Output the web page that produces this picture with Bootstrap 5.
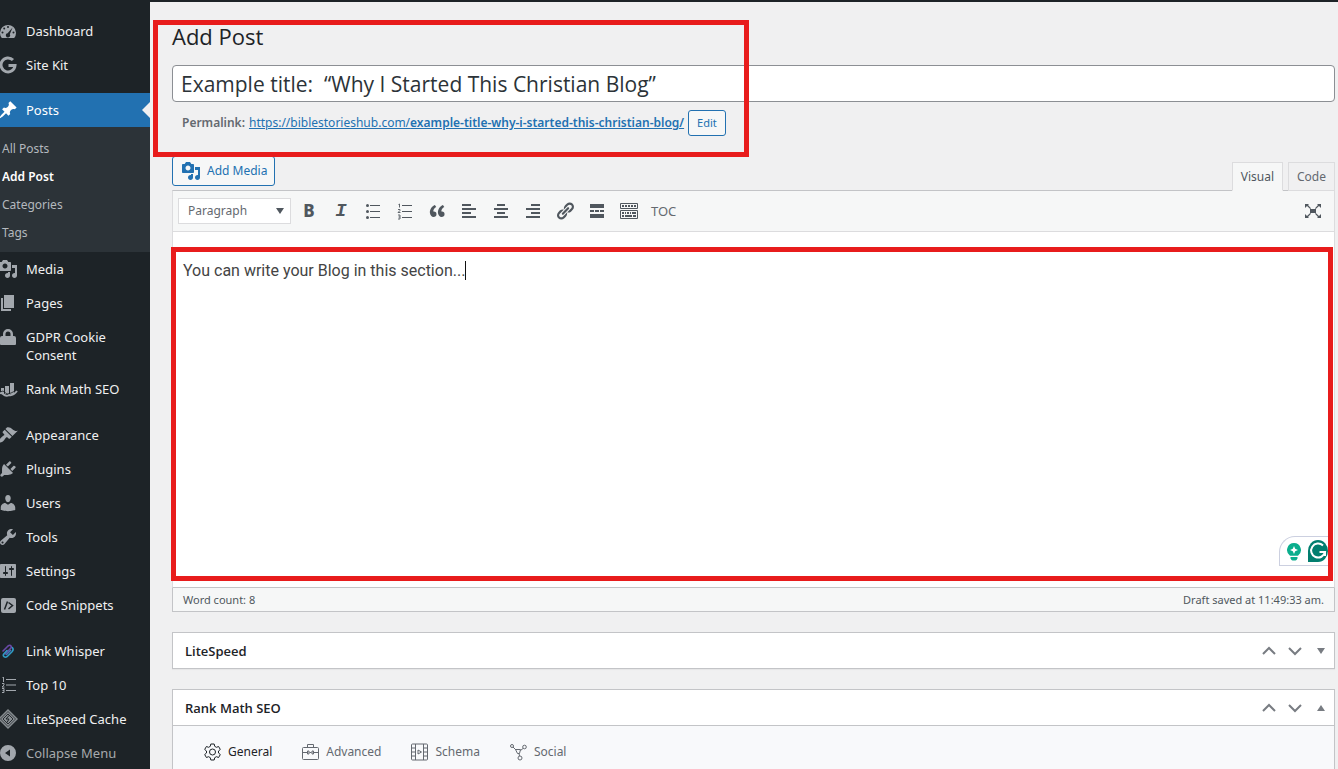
<!DOCTYPE html>
<html lang="en">
<head>
<meta charset="utf-8">
<meta name="viewport" content="width=device-width, initial-scale=1">
<title>Add Post</title>
<link href="https://cdn.jsdelivr.net/npm/bootstrap@5.3.0/dist/css/bootstrap.min.css" rel="stylesheet">
<style>
  body { font-family: "Noto Sans", "Open Sans", sans-serif; font-size: 13px; line-height: 18px; color: #3c434a; background: #f0f0f1; }
  .admin-shell { border-top: 2px solid #1d2327; }
  svg { flex: none; display: block; }

  .admin-menu { width: 150px; background: #1d2327; padding-top: 12px; }
  .admin-menu .menu-link { display: flex; gap: 8px; padding: 8px 0; color: #f0f0f1; text-decoration: none; position: relative; }
  .admin-menu .menu-link svg { width: 20px; height: 20px; margin: -1px 0 -1px -2px; color: #a2a7ad; fill: currentColor; }
  .admin-menu .section-start { margin-top: 12px; }
  .admin-menu .posts-item { margin-top: 11px; }
  .admin-menu .menu-link.active { background: #2271b1; color: #fff; }
  .admin-menu .menu-link.active svg { color: #fff; }
  .admin-menu .menu-link.active::after { content: ""; position: absolute; right: 0; top: 9px; border: 8px solid transparent; border-left: 0; border-right-color: #f0f0f1; }
  .admin-menu .submenu { background: #2c3338; padding: 8px 2px 5px; font-size: 12px; }
  .admin-menu .submenu a { display: block; padding: 5px 0; color: #b4b9be; text-decoration: none; }
  .admin-menu .submenu a.active { color: #fff; font-weight: 600; }
  .admin-menu .collapse-btn { width: 100%; border: 0; background: none; color: #a7aaad; text-align: left; }

  .editor-page { padding: 18px 3px 0 22px; }
  .title-area h1 { font: 400 22px/32px "Open Sans", sans-serif; color: #1d2327; margin: 0 0 13px; }
  .title-area .post-title { height: 37px; padding: 2px 8px; font: 21px/30px "Open Sans", sans-serif; color: #2c3338; border: 1px solid #8c8f94; border-radius: 4px; }
  .permalink { padding: 8px 10px 0; font-size: 12px; color: #646970; }
  .permalink a { color: #2271b1; }
  .wp-btn { border: 1px solid #2271b1; color: #2271b1; background: #f6f7f7; border-radius: 3px; padding: 0 8px; }
  .edit-btn { font-size: 11px; height: 26px; }
  .media-btn { height: 30px; gap: 6px; padding: 0 7px 0 8px; font-size: 12px; }
  .highlight { position: absolute; border: 5px solid #e81c1c; pointer-events: none; z-index: 3; }
  .title-highlight { left: -19px; top: 0; width: 596px; height: 137px; }
  .body-highlight { inset: 15px 1px 6px -2px; }

  .editor-tools { margin-top: 20px; }
  .tab-group { gap: 5px; }
  .editor-tab { border: 1px solid #dcdcde; background: #f0f0f1; color: #646970; height: 29px; padding: 0 8px; margin-bottom: -1px; font-size: 12px; }
  .editor-tab.active { background: #f6f7f7; color: #50575e; border-bottom-color: #f6f7f7; position: relative; }
  .editor-frame { border: 1px solid #c3c4c7; border-left-color: #dcdcde; border-right-color: #dcdcde; background: #fff; }
  .editor-bar { background: #f6f7f7; border-bottom: 1px solid #dcdcde; padding: 7px 5px; }
  .editor-bar select { width: 113px; height: 26px; font-size: 12px; line-height: 18px; color: #646970; border: 1px solid #dcdcde; border-radius: 0; padding: 3px 9px; margin-right: 2px; background: #fff url("data:image/svg+xml,%3Csvg xmlns='http://www.w3.org/2000/svg' viewBox='0 0 10 8'%3E%3Cpath d='M1 1h8L5 7z' fill='%2350575e'/%3E%3C/svg%3E") no-repeat right 5px center / 10px 8px; }
  .tool-btn { width: 32px; height: 26px; border: 0; padding: 0; background: none; color: #50575e; display: flex; align-items: center; justify-content: center; }
  .tool-btn svg { width: 20px; height: 20px; fill: currentColor; }
  .tool-btn.bold-btn { font-size: 17px; font-weight: 800; }
  .tool-btn.italic-btn { font: italic bold 19px/20px "Liberation Mono", monospace; }
  .tool-btn.toc-btn { color: #646970; padding-left: 6px; width: auto; }
  .writing-area { height: 355px; position: relative; }
  .writing-area .post-body { height: 100%; padding: 29px 10px; font: 16px/20px Roboto, sans-serif; color: #444; outline: 0; }
  .caret { border-left: 1px solid #111; }
  .assistant { position: absolute; right: 4px; bottom: 21px; width: 51px; height: 30px; border: 1px solid #ccd0e0; border-right: 0; border-radius: 16px 0 0 0; background: #fff; padding: 3px 0 0 6px; gap: 4px; overflow: hidden; }
  .status-bar { border: 1px solid #c3c4c7; border-top: 0; background: #f6f7f7; padding: 3px 10px 2px; font-size: 11px; color: #50575e; }

  .postbox { border: 1px solid #c3c4c7; background: #fff; margin-top: 20px; box-shadow: 0 1px 1px rgba(0,0,0,.04); }
  .postbox header { padding-left: 12px; height: 35px; }
  .postbox h2 { font: 600 13px/18px "Open Sans", sans-serif; color: #1d2327; margin: 0; }
  .postbox header button { width: 26px; height: 35px; border: 0; padding: 0; background: none; color: #787c82; display: flex; align-items: center; justify-content: center; }
  .seo-tabs { border-top: 1px solid #c3c4c7; background: #f8f9fb; padding: 0 16px; }
  .seo-tabs button { border: 0; background: none; padding: 0 15px; height: 51px; color: #646970; font-size: 12px; gap: 7px; }
  .seo-tabs button.active { color: #1d2327; }
  .seo-tabs svg { fill: none; stroke: currentColor; }
</style>
</head>
<body>
<div class="admin-shell d-flex vh-100 overflow-hidden">
  <nav class="admin-menu flex-shrink-0" aria-label="Main menu">
    <a class="menu-link" href="#"><svg viewBox="0 0 20 20"><path fill-rule="evenodd" d="M3.8 17h12.4A8 8 0 1 0 3.8 17zM10 5a1 1 0 1 1 0 2 1 1 0 0 1 0-2zM6.2 6.5a1 1 0 1 1 0 2 1 1 0 0 1 0-2zM4.5 10.5a1 1 0 1 1 0 2 1 1 0 0 1 0-2zM15.5 10.5a1 1 0 1 1 0 2 1 1 0 0 1 0-2zM14.6 6.6l-2.8 6.7a2.1 2.1 0 1 1-2.2-1z"/></svg>Dashboard</a>
    <a class="menu-link" href="#"><svg viewBox="0 0 20 20"><path d="M15 5A7 7 0 1 0 17 10.500H10.500" fill="none" stroke="currentColor" stroke-width="3"/></svg>Site Kit</a>
    <div class="posts-item">
      <a class="menu-link active" href="#"><svg viewBox="0 0 20 20"><path d="M10.440 3.020l1.820-1.820 6.360 6.350-1.830 1.820c-1.050-.68-2.480-.57-3.410.36l-.75.75c-.92.93-1.040 2.350-.35 3.410l-1.830 1.820-2.410-2.410-2.800 2.790c-.42.42-3.380 2.710-3.800 2.290s1.860-3.390 2.280-3.810l2.790-2.790L4.100 9.360l1.830-1.820c1.050.69 2.480.57 3.400-.36l.75-.75c.93-.92 1.050-2.350.36-3.410z"/></svg>Posts</a>
      <div class="submenu">
        <a href="#">All Posts</a>
        <a href="#" class="active">Add Post</a>
        <a href="#">Categories</a>
        <a href="#">Tags</a>
      </div>
    </div>
    <a class="menu-link" href="#"><svg viewBox="0 0 20 20"><path id="media-shape" d="M13 11V4c0-.55-.45-1-1-1h-1.670L9 1H5L3.670 3H2c-.55 0-1 .45-1 1v7c0 .55.45 1 1 1h10c.55 0 1-.45 1-1zM7 4.500c1.380 0 2.500 1.120 2.500 2.500S8.380 9.500 7 9.500 4.500 8.380 4.500 7 5.620 4.500 7 4.500zM14 6h5v10.500c0 1.380-1.120 2.500-2.500 2.500S14 17.880 14 16.500s1.120-2.500 2.500-2.500c.17 0 .34.02.5.05V9h-3V6zm-4 8.050V13h2v3.500c0 1.380-1.120 2.500-2.500 2.500S7 17.880 7 16.500 8.120 14 9.500 14c.17 0 .34.02.5.05z"/></svg>Media</a>
    <a class="menu-link" href="#"><svg viewBox="0 0 20 20"><path d="M6 15V2h10v13H6zm-1 1h8v2H3V5h2v11z"/></svg>Pages</a>
    <a class="menu-link" href="#"><svg viewBox="0 0 20 20"><path fill-rule="evenodd" d="M2 17v-6q0-2 2-2h1V7a5 5 0 0 1 10 0v2h1q2 0 2 2v6q0 1-1 1H3q-1 0-1-1zM7.500 9h5V7a2.500 2.500 0 0 0-5 0z"/></svg>GDPR Cookie<br>Consent</a>
    <a class="menu-link" href="#"><svg viewBox="0 0 20 20"><path d="M3 9h3v6H3zM7 7h4v8H7zM12 4h4v11h-4z"/><path d="M0 15q3-2 5 0 3 3 6 1 4 1 8-4" fill="none" stroke="currentColor" stroke-width="2"/><path d="M2 13l3-1 4 3 4-1 4-2" stroke="#1d2327" stroke-width=".8" fill="none"/></svg>Rank Math SEO</a>
    <a class="menu-link section-start" href="#"><svg viewBox="0 0 20 20"><path d="M14.480 11.060L7.410 3.990l1.500-1.500c.5-.56 2.300-.47 3.510.32 1.210.8 1.430 1.280 2.910 2.100 1.180.64 2.450 1.260 4.450.85zm-.71.71L6.700 4.700 4.930 6.470c-.39.39-.39 1.020 0 1.410l1.060 1.060c.39.39.39 1.030 0 1.420-.6.6-1.430 1.110-2.210 1.690-.35.26-.7.53-1.010.84C1.430 14.230.4 16.080 1.400 17.070c.99 1 2.840-.03 4.180-1.360.31-.31.58-.66.85-1.020.57-.78 1.080-1.610 1.690-2.210.39-.39 1.020-.39 1.410 0l1.060 1.060c.39.39 1.020.39 1.410 0z"/></svg>Appearance</a>
    <a class="menu-link" href="#"><svg viewBox="0 0 20 20"><path d="M13.110 4.360L9.870 7.600 8 5.730l3.240-3.240c.35-.34 1.050-.2 1.560.32.52.51.66 1.210.31 1.550zm-8 1.770l.91-1.120 9.010 9.010-1.190.84c-.71.71-2.630 1.160-3.820 1.160H6.140L4.900 17.260c-.59.59-1.540.59-2.120 0-.59-.58-.59-1.530 0-2.120l1.240-1.240v-3.880c0-1.130.4-3.190 1.090-3.890zm7.260 3.970l3.240-3.240c.34-.35 1.040-.21 1.550.31.52.51.66 1.210.31 1.550l-3.240 3.250z"/></svg>Plugins</a>
    <a class="menu-link" href="#"><svg viewBox="0 0 20 20"><path d="M10 9.250c-2.270 0-2.730-3.440-2.730-3.440C7 4.020 7.820 2 9.970 2c2.160 0 2.980 2.020 2.710 3.810 0 0-.41 3.440-2.680 3.440zm0 2.570L12.720 10c2.390 0 4.520 2.330 4.520 4.530v2.490s-3.650 1.130-7.240 1.130c-3.650 0-7.240-1.130-7.240-1.130v-2.490c0-2.250 1.940-4.480 4.470-4.480z"/></svg>Users</a>
    <a class="menu-link" href="#"><svg viewBox="0 0 20 20"><path d="M16.680 9.770c-1.340 1.340-3.300 1.670-4.950.99l-5.410 6.520c-.99.99-2.590.99-3.580 0s-.99-2.590 0-3.570l6.520-5.420c-.68-1.650-.35-3.610.99-4.950 1.280-1.280 3.120-1.620 4.720-1.060l-2.890 2.890 2.820 2.820 2.860-2.870c.53 1.580.18 3.390-1.080 4.650zM3.810 16.210c.4.39 1.040.39 1.430 0 .4-.4.4-1.040 0-1.430-.39-.4-1.030-.4-1.430 0-.39.39-.39 1.030 0 1.430z"/></svg>Tools</a>
    <a class="menu-link" href="#"><svg viewBox="0 0 20 20"><path d="M18 16V4c0-.55-.45-1-1-1H3c-.55 0-1 .45-1 1v12c0 .55.45 1 1 1h14c.55 0 1-.45 1-1zM8 11h1c.55 0 1 .45 1 1s-.45 1-1 1H8v1.500c0 .28-.22.5-.5.5s-.5-.22-.5-.5V13H6c-.55 0-1-.45-1-1s.45-1 1-1h1V5.500c0-.28.22-.5.5-.5s.5.22.5.5V11zm5-2h-1c-.55 0-1-.45-1-1s.45-1 1-1h1V5.500c0-.28.22-.5.5-.5s.5.22.5.5V7h1c.55 0 1 .45 1 1s-.45 1-1 1h-1v5.500c0 .28-.22.5-.5.5s-.5-.22-.5-.5V9z"/></svg>Settings</a>
    <a class="menu-link" href="#"><svg viewBox="0 0 20 20"><rect x="3" y="3" width="15" height="15" rx="2"/><path d="M9.500 6.500L6.500 14.500M10.500 7.500l4 3-4 3.500" stroke="#1d2327" stroke-width="1.500" fill="none"/></svg>Code Snippets</a>
    <a class="menu-link section-start" href="#"><svg viewBox="0 0 20 20"><g fill="none" stroke-linecap="round" stroke-width="1.600"><path d="M5 10l5-5q2-1.500 3 0t-1 3l-5 5" stroke="#6a4aa8"/><path d="M9 9.500l-3 3.200q-1.500 1.800 0 3t3 0l5-5q2-2.200.5-4" stroke="#2f9bc4"/><path d="M8.500 13.500l4-4" stroke="#4675b8"/></g></svg>Link Whisper</a>
    <a class="menu-link" href="#"><svg viewBox="0 0 20 20"><path d="M8 4h10v1H8zM8 9.500h10v1H8zM8 15h10v1H8z"/><path d="M4.500 3l1-1v5M4 8.500h2v1.500l-2 2h2.500M4 13.500h2v4H4M4.500 15.500H6" fill="none" stroke="currentColor"/></svg>Top 10</a>
    <a class="menu-link" href="#"><svg viewBox="0 0 20 20"><path d="M10 0l10 10-10 10L0 10z" opacity=".8"/><path d="M10 2.500l7.500 7.500-7.500 7.500L2.500 10z" fill="none" stroke="#1d2327" stroke-width=".7"/><path d="M10 5l5 5-5 5-5-5z" fill="none" stroke="#1d2327" stroke-width=".9"/><path d="M11 6.500L8 10h3l-2 3.500" fill="none" stroke="#1d2327"/></svg>LiteSpeed Cache</a>
    <button class="menu-link collapse-btn" type="button"><svg viewBox="0 0 20 20"><path fill-rule="evenodd" d="M10 2a8 8 0 1 1 0 16 8 8 0 0 1 0-16zM12 6.500L7 10l5 3.500z"/></svg>Collapse Menu</button>
  </nav>

  <main class="editor-page flex-grow-1">
    <section class="title-area position-relative">
      <h1>Add Post</h1>
      <input class="post-title form-control" type="text" aria-label="Title" value="Example title:&nbsp; “Why I Started This Christian Blog”">
      <div class="permalink d-flex align-items-center gap-1">
        <strong class="fw-semibold">Permalink:</strong>
        <a href="#">https://biblestorieshub.com/<b class="fw-semibold">example-title-why-i-started-this-christian-blog/</b></a>
        <button class="wp-btn edit-btn" type="button">Edit</button>
      </div>
      <div class="highlight title-highlight"></div>
    </section>

    <div class="editor-tools d-flex align-items-end">
      <button class="wp-btn media-btn d-flex align-items-center mb-1" type="button"><svg width="20" height="20" viewBox="0 0 20 20" fill="currentColor"><use href="#media-shape"/></svg>Add Media</button>
      <div class="tab-group ms-auto d-flex">
        <button class="editor-tab active" type="button">Visual</button>
        <button class="editor-tab" type="button">Code</button>
      </div>
    </div>

    <div class="editor-frame">
      <div class="editor-bar d-flex align-items-center">
        <select class="form-select" aria-label="Block format"><option>Paragraph</option><option>Heading 2</option></select>
        <button class="tool-btn bold-btn" type="button">B</button>
        <button class="tool-btn italic-btn" type="button">I</button>
        <button class="tool-btn" type="button" aria-label="Bulleted list"><svg viewBox="0 0 20 20"><path d="M7 4h10v1H7zM7 10h10v1H7zM7 16h10v1H7z"/><circle cx="4.500" cy="4.500" r="1.500"/><circle cx="4.500" cy="10.500" r="1.500"/><circle cx="4.500" cy="16.500" r="1.500"/></svg></button>
        <button class="tool-btn" type="button" aria-label="Numbered list"><svg viewBox="0 0 20 20"><path d="M7 4h10v1H7zM7 10h10v1H7zM7 16h10v1H7z"/><path d="M3.500 3.500l1-.5v3.500M3 8.500h2v1l-2 2h2.500M3 14h2v4H3M3.500 16H5" fill="none" stroke="currentColor" stroke-width=".9"/></svg></button>
        <button class="tool-btn" type="button" aria-label="Blockquote"><svg viewBox="0 0 20 20"><path d="M9.490 13.220c0-.74-.2-1.380-.61-1.900-.62-.78-1.830-.88-2.530-.72-.29-1.650 1.110-3.750 2.920-4.650L7.880 4c-2.730 1.300-5.420 4.280-4.960 8.050C3.210 14.430 4.590 16 6.540 16c.85 0 1.560-.25 2.120-.75s.83-1.180.83-2.030zm8.050 0c0-.74-.2-1.380-.61-1.900-.63-.78-1.830-.88-2.530-.72-.29-1.650 1.110-3.750 2.920-4.650L15.930 4c-2.730 1.300-5.410 4.280-4.950 8.050.29 2.380 1.660 3.950 3.610 3.950.85 0 1.560-.25 2.120-.75s.83-1.180.83-2.030z"/></svg></button>
        <button class="tool-btn" type="button" aria-label="Align left"><svg viewBox="0 0 20 20"><path d="M3 3h9v2H3zM3 7h14v2H3zM3 11h9v2H3zM3 15h14v2H3z"/></svg></button>
        <button class="tool-btn" type="button" aria-label="Align center"><svg viewBox="0 0 20 20"><path d="M6 3h8v2H6zM3 7h14v2H3zM6 11h8v2H6zM3 15h14v2H3z"/></svg></button>
        <button class="tool-btn" type="button" aria-label="Align right"><svg viewBox="0 0 20 20"><path d="M8 3h9v2H8zM3 7h14v2H3zM8 11h9v2H8zM3 15h14v2H3z"/></svg></button>
        <button class="tool-btn" type="button" aria-label="Insert link"><svg viewBox="0 0 20 20"><path d="M17.740 2.760c1.680 1.690 1.680 4.410 0 6.100l-1.530 1.520c-1.120 1.120-2.700 1.470-4.140 1.090l2.620-2.610.76-.77.76-.76c.84-.84.84-2.200 0-3.040-.84-.85-2.200-.85-3.040 0l-.77.76-3.380 3.380c-.37-1.440-.02-3.020 1.100-4.140l1.520-1.530c1.690-1.680 4.420-1.680 6.100 0zM8.590 13.430l5.340-5.340c.42-.42.42-1.100 0-1.520-.44-.43-1.130-.39-1.530 0l-5.330 5.340c-.42.42-.42 1.100 0 1.520.44.43 1.130.39 1.520 0zm-.76 2.290l4.140-4.150c.38 1.440.03 3.020-1.090 4.140l-1.520 1.530c-1.690 1.680-4.410 1.680-6.100 0-1.680-1.680-1.680-4.420 0-6.100l1.530-1.520c1.120-1.120 2.700-1.470 4.140-1.100l-4.140 4.150c-.85.84-.85 2.200 0 3.050.84.84 2.200.84 3.040 0z"/></svg></button>
        <button class="tool-btn" type="button" aria-label="Read more tag"><svg viewBox="0 0 20 20"><path d="M3 3h14v4H3zM3 9h4v2H3zM8 9h4v2H8zM13 9h4v2h-4zM3 13h14v4H3z"/></svg></button>
        <button class="tool-btn" type="button" aria-label="Toolbar toggle"><svg viewBox="0 0 20 20"><path d="M1.500 2.500h17v5h-17zM1.500 9.500h17v8h-17z" fill="none" stroke="currentColor"/><path d="M3 4h2v2H3zM6 4h2v2H6zM9 4h2v2H9zM12 4h2v2h-2zM15 4h2v2h-2zM3 11h2v2H3zM6 11h1v2H6zM8 11h2v2H8zM11 11h1v2h-1zM13 11h4v2h-4zM3 14h2v2H3zM6 14h7v2H6zM14 14h3v2h-3z"/></svg></button>
        <button class="tool-btn toc-btn" type="button">TOC</button>
        <button class="tool-btn ms-auto" type="button" aria-label="Distraction-free writing"><svg viewBox="0 0 20 20"><path d="M7 8h6v4H7zM2 3h4L5 4l3 3.200-.8.800L4 5 2 7zM18 3h-4l1 1-3 3.200.8.800L16 5l2 2zM2 17h4l-1-1 3-3.200-.8-.8L4 15l-2-2zM18 17h-4l1-1-3-3.200.8-.8L16 15l2-2z"/></svg></button>
      </div>
      <div class="writing-area">
        <div class="post-body" contenteditable="true" role="textbox" aria-multiline="true" aria-label="Post content" spellcheck="false">You can write your Blog in this section...<span class="caret"></span></div>
        <div class="assistant d-flex">
          <svg width="16" height="22" viewBox="0 0 16 22"><path d="M8 3a7 7 0 0 1 4 12.700H4A7 7 0 0 1 8 3zM4.500 17h7v1.500q-1 2-2 2h-3q-1 0-2-2z" fill="#0bae8d"/><path d="M8 6l1.200 2.800L12 10l-2.800 1.200L8 14l-1.200-2.800L4 10l2.800-1.200z" fill="#fff"/><path d="M4 16h8v1H4z" fill="#fff"/></svg>
          <svg width="24" height="22" viewBox="0 0 24 22"><path d="M2 11a10 11 0 1 1 10 11H2z" fill="#027e6f"/><path d="M17 5.500A7 7 0 1 0 19 12h-5.500M19 12v4" fill="none" stroke="#fff" stroke-width="2"/></svg>
        </div>
        <div class="highlight body-highlight"></div>
      </div>
    </div>
    <div class="status-bar d-flex justify-content-between"><span>Word count: 8</span><span>Draft saved at 11:49:33 am.</span></div>

    <section class="postbox">
      <header class="d-flex align-items-center">
        <h2 class="me-auto">LiteSpeed</h2>
        <button type="button" aria-label="Move up"><svg width="14" height="10" viewBox="0 0 14 10"><path d="M1 8l6-6 6 6" fill="none" stroke="currentColor" stroke-width="2"/></svg></button>
        <button type="button" aria-label="Move down"><svg width="14" height="10" viewBox="0 0 14 10"><path d="M1 2l6 6 6-6" fill="none" stroke="currentColor" stroke-width="2"/></svg></button>
        <button type="button" aria-label="Expand panel"><svg width="8" height="6" viewBox="0 0 8 6"><path d="M0 0h8L4 6z" fill="currentColor"/></svg></button>
      </header>
    </section>

    <section class="postbox">
      <header class="d-flex align-items-center">
        <h2 class="me-auto">Rank Math SEO</h2>
        <button type="button" aria-label="Move up"><svg width="14" height="10" viewBox="0 0 14 10"><path d="M1 8l6-6 6 6" fill="none" stroke="currentColor" stroke-width="2"/></svg></button>
        <button type="button" aria-label="Move down"><svg width="14" height="10" viewBox="0 0 14 10"><path d="M1 2l6 6 6-6" fill="none" stroke="currentColor" stroke-width="2"/></svg></button>
        <button type="button" aria-label="Collapse panel"><svg width="8" height="6" viewBox="0 0 8 6"><path d="M0 6h8L4 0z" fill="currentColor"/></svg></button>
      </header>
      <div class="seo-tabs d-flex">
        <button class="active d-flex align-items-center" type="button"><svg width="17" height="18" viewBox="0 0 17 18"><path d="M6.800 1h3.400l.5 2.300 1.700 1 2.200-.8 1.700 3-1.800 1.500v2l1.800 1.500-1.700 3-2.200-.8-1.700 1-.5 2.300H6.800l-.5-2.300-1.700-1-2.200.8-1.700-3L2.500 10V8L.7 6.500l1.700-3 2.200.8 1.700-1z" stroke-linejoin="round"/><circle cx="8.500" cy="9" r="3"/></svg>General</button>
        <button class="d-flex align-items-center" type="button"><svg width="17" height="18" viewBox="0 0 17 18"><rect x=".5" y="4.500" width="16" height="12" rx="1"/><path d="M5.500 4V1.500h6V4M.5 9.500h5M7.500 9.500h2M11.500 9.500h5M5.500 8v3h1.500V8zM10 8v3h1.500V8z"/></svg>Advanced</button>
        <button class="d-flex align-items-center" type="button"><svg width="17" height="18" viewBox="0 0 17 18"><rect x=".5" y="1" width="16" height="16" rx="1"/><path d="M4.500 1v16M12.500 1v16M.5 5h4M.5 9h4M.5 13h4M12.500 5h4M12.500 9h4M12.500 13h4M7 7l3.500 2L7 11z"/></svg>Schema</button>
        <button class="d-flex align-items-center" type="button"><svg width="17" height="18" viewBox="0 0 17 18"><circle cx="2" cy="3" r="1.500"/><circle cx="14.500" cy="4" r="1.800"/><circle cx="10" cy="15" r="2"/><path d="M3 4l3 3M13 5.500l-2.500 2M9 10.500l.5 2.500M5.500 6.500h5l-1 4h-2z"/></svg>Social</button>
      </div>
    </section>
  </main>
</div>
<script src="https://cdn.jsdelivr.net/npm/bootstrap@5.3.0/dist/js/bootstrap.bundle.min.js"></script>
</body>
</html>
